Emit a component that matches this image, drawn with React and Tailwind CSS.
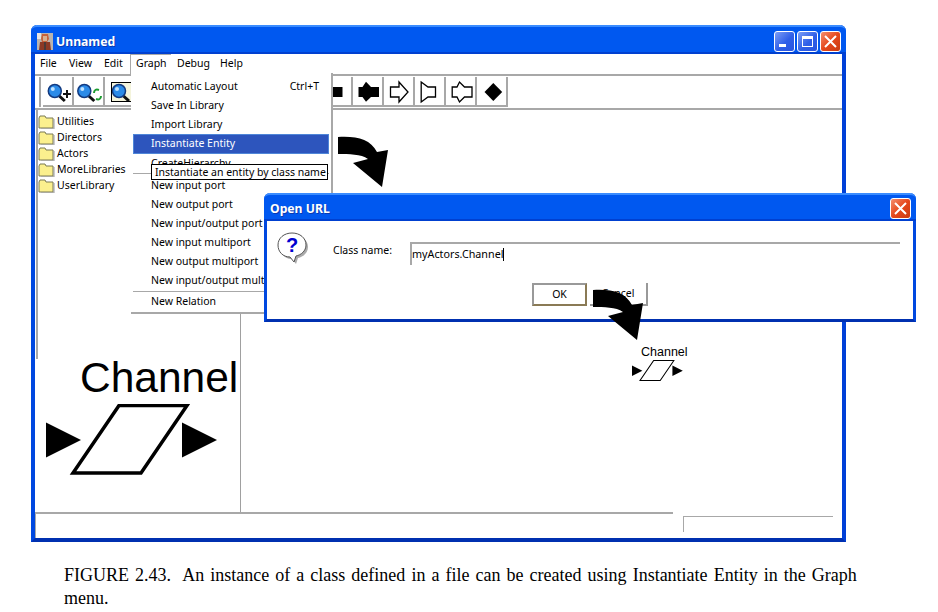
import React from 'react';

const ui = { fontFamily: '"Noto Sans", sans-serif' };
const arial = { fontFamily: '"Liberation Sans", sans-serif' };

const Folder = () => (
    <svg width="17" height="14" viewBox="0 0 17 14">
        <path d="M1 3 L2 1 H7 L8 3 H15 V13 H1 Z" fill="#fbf08e" stroke="#7a7a55" />
        <path d="M16 4 V14 H3" fill="none" stroke="#999" />
    </svg>
);

const Magnifier = ({ mark, cx = 9.8 }) => (
    <svg width="26" height="24" viewBox="0 0 26 24">
        <path d={`M${cx + 4.5} 16 L${cx + 10} 21`} stroke="#111" strokeWidth="3" />
        <circle cx={cx} cy="11" r="6.5" fill="#2b8be8" stroke="#123a80" strokeWidth="1.5" />
        <circle cx={cx - 2} cy="9" r="2" fill="#bfe2ff" />
        {mark === 'plus' && <path d="M18 14 H26 M22 10 V18" stroke="#111" strokeWidth="2" />}
        {mark === 'reset' && (
            <g fill="none" stroke="#1c9c30" strokeWidth="2">
                <path d="M18 13 C18 10 20 9 23 10" />
                <path d="M25 16 C25 19 23 20 20 19" />
            </g>
        )}
    </svg>
);

const shapes = {
    blackEnd: <path d="M1 7 H16.5 V17 H1 Z" fill="#000" />,
    blackBoth: <path d="M1.5 7 H5.5 L9 1.7 L14 7 H22 V17 H14 L9 21.7 L5.5 17 H1.5 Z" fill="#000" />,
    hollowRight: <path d="M2.5 7 H11 V2 L20 12 L11 22 V17 H2.5 Z" fill="#fff" stroke="#000" strokeWidth="1.3" />,
    hollowFlag: <path d="M2.2 2 L9 7 H16.5 V17 H9 L2.2 22 Z" fill="#fff" stroke="#000" strokeWidth="1.3" />,
    hollowBoth: <path d="M2.2 7 H7 L9.5 2 L14.5 7 H22 V17 H14.5 L9.5 22 L7 17 H2.2 Z" fill="#fff" stroke="#000" strokeWidth="1.3" />,
    diamond: <path d="M12.3 3 L21.2 12 L12.3 21 L3.5 12 Z" fill="#000" />,
};

const ToolButton = ({ children }) => (
    <div className="flex h-[30px] w-[31px] shrink-0 items-center justify-center border-r-2 border-b-2 border-[#a8a8a8] bg-white pt-[2px]">
        {children}
    </div>
);

const Shape = ({ name }) => (
    <svg width="22" height="24" viewBox="0 0 22 24" className="overflow-visible">{shapes[name]}</svg>
);

const CloseButton = () => (
    <div className="flex h-[21px] w-[21px] items-center justify-center rounded-[3px] border border-white bg-[linear-gradient(135deg,#f58f70,#e5481c_50%,#c93a10)]">
        <svg width="13" height="13" viewBox="0 0 13 13"><path d="M1 1 L12 12 M12 1 L1 12" stroke="#fff" strokeWidth="2" /></svg>
    </div>
);

const tree = ['Utilities', 'Directors', 'Actors', 'MoreLibraries', 'UserLibrary'];
const menuTop = ['Automatic Layout', 'Save In Library', 'Import Library'];
const menuPorts = ['New input port', 'New output port', 'New input/output port', 'New input multiport', 'New output multiport', 'New input/output multiport'];
const menuBar = [['File', 'w-[29px]'], ['View', 'w-[35px]'], ['Edit', 'w-[32px]'], ['Graph', 'w-[41px]'], ['Debug', 'w-[43px]'], ['Help', 'w-[30px]']];

const CurvedArrow = ({ className }) => (
    <svg className={className} width="52" height="52" viewBox="0 0 52 52">
        <path d="M1 1 C20 0 33 3 40 16 L51 14 L45 51 L16 27 L31 23 C24 18 12 18 1 18 Z" fill="#000" />
    </svg>
);

const ChannelIcon = ({ className, size }) => (
    <svg className={className} width={size} height={size * 0.5} viewBox="0 0 175 87.5">
        <path d="M0 18.5 L35 36 L0 53.5 Z M136 18.5 L171 36 L136 53.5 Z" fill="#000" />
        <path d="M73 1.5 H141 L95 69 H27 Z" fill="#fff" stroke="#000" strokeWidth="3.5" />
    </svg>
);

export default function App() {
    return (
        <div className="relative h-[612px] w-[938px] overflow-hidden bg-white text-[10.5px] text-black" style={ui}>
            <div className="ml-[31px] pt-[25px]">
                <div className="flex h-[517px] w-[815px] flex-col rounded-t-md border-x-4 border-b-4 border-[#0048e0] border-r-[#0040d8] border-b-[#0030b0] bg-white">
                    <div className="-mx-1 flex h-[29px] shrink-0 items-center rounded-t-md border-t-2 border-[#3a8cff] bg-[#0058f0] pl-[6px] pr-[5px] pt-[1px] shadow-[inset_0_-2px_0_#0040d0]">
                        <svg width="16" height="17" viewBox="0 0 16 17">
                            <rect width="16" height="17" fill="#b9b4b0" />
                            <rect x="0" y="0" width="4" height="6" fill="#e8e4e0" />
                            <path d="M5 1 H11 L12 6 L10 9 H5 L4 6 Z" fill="#c8623a" />
                            <path d="M6 3 H10 V8 H6 Z" fill="#d8b090" />
                            <path d="M3 9 H13 L14 17 H2 Z" fill="#8c3a26" />
                            <path d="M7 9 H9 V17 H7 Z" fill="#4a3a38" />
                        </svg>
                        <span className="ml-[3px] mt-[2px] text-[12.2px] font-bold leading-none text-white [text-shadow:1px_1px_0_#0a3ab0]">Unnamed</span>
                        <div className="ml-auto flex gap-[2px]">
                            <div className="relative h-[21px] w-[21px] rounded-[3px] border border-white bg-[linear-gradient(135deg,#7d9ef5,#2f5fe8_55%,#2a55e0)]">
                                <div className="absolute bottom-[4px] left-[4px] h-[3px] w-[7px] bg-white" />
                            </div>
                            <div className="flex h-[21px] w-[21px] items-center justify-center rounded-[3px] border border-white bg-[linear-gradient(135deg,#7d9ef5,#2f5fe8_55%,#2a55e0)]">
                                <div className="h-[11px] w-[11px] border border-t-[3px] border-white" />
                            </div>
                            <CloseButton />
                        </div>
                    </div>

                    <div className="flex h-[20px] shrink-0 items-center pl-[5px]">
                        {menuBar.map(([label, width]) => (
                            <span key={label} className={width}>{label}</span>
                        ))}
                    </div>

                    <div className="flex h-[36px] shrink-0 items-center border-y-2 border-[#a8a8a8] pl-[4px]">
                        <div className="mr-[2px] h-[30px] w-[2px] bg-[#a8a8a8]" />
                        <ToolButton><Magnifier mark="plus" /></ToolButton>
                        <ToolButton><Magnifier mark="reset" cx={8.3} /></ToolButton>
                        <ToolButton>
                            <div className="ml-[8px] h-[20px] w-[26px] shrink-0 overflow-hidden border border-black bg-[#f4f4dc]">
                                <div className="-mt-[3px]"><Magnifier cx={7} /></div>
                            </div>
                        </ToolButton>
                        {Array.from({ length: 6 }).map((_, i) => <ToolButton key={i} />)}
                        <ToolButton><Shape name="blackEnd" /></ToolButton>
                        <ToolButton><Shape name="blackBoth" /></ToolButton>
                        <ToolButton><Shape name="hollowRight" /></ToolButton>
                        <ToolButton><Shape name="hollowFlag" /></ToolButton>
                        <ToolButton><Shape name="hollowBoth" /></ToolButton>
                        <ToolButton><Shape name="diamond" /></ToolButton>
                    </div>

                    <div className="flex min-h-0 flex-1">
                        <div className="flex w-[206px] shrink-0 flex-col border-r border-[#a0a0a0]">
                            <div className="ml-[1px] flex h-[249px] flex-col border-l-2 border-[#a8a8a8] pt-[4px]">
                                {tree.map((name) => (
                                    <div key={name} className="flex h-[16px] items-center gap-[2px]">
                                        <Folder />
                                        <span>{name}</span>
                                    </div>
                                ))}
                            </div>
                            <div className="-mt-[1px] flex flex-1 flex-col pl-[11px]">
                                <div className="ml-[34px] whitespace-nowrap text-[42.5px] leading-[40px]" style={arial}>Channel</div>
                                <ChannelIcon className="mt-[6px]" size={175} />
                            </div>
                        </div>
                        <div className="flex-1" />
                    </div>

                    <div className="flex h-[26px] shrink-0">
                        <div className="h-full w-[638px] border-t-2 border-l border-[#a8a8a8]" />
                        <div className="ml-[10px] mt-[4px] h-[16px] w-[150px] border-t border-l border-[#a8a8a8]" />
                    </div>
                </div>
            </div>

            <div className="ml-[64px] mt-[22px] w-[800px] text-[18px] leading-[23px] [word-spacing:1.55px]" style={{ fontFamily: '"Liberation Serif", serif' }}>
                FIGURE 2.43.&nbsp; An instance of a class defined in a file can be created using Instantiate Entity in the Graph menu.
            </div>

            {/* open Graph menu */}
            <div className="absolute left-[130px] top-[54px] h-[20px] w-[41px] border-l border-t border-[#a8a8a8]" />
            <div className="absolute left-[131px] top-[73px] flex h-[241px] w-[202px] flex-col border-r-2 border-b-2 border-[#a8a8a8] bg-white px-[2px] pt-[4px]">
                {menuTop.map((item) => (
                    <div key={item} className="flex h-[19px] shrink-0 items-center justify-between pl-[18px] pr-[10px]">
                        <span>{item}</span>
                        {item === 'Automatic Layout' && <span>Ctrl+T</span>}
                    </div>
                ))}
                <div className="flex h-[20px] shrink-0 items-center border border-[#4f86d8] bg-[#2d55bd] pl-[17px] text-white">Instantiate Entity</div>
                <div className="flex h-[19px] shrink-0 items-center pl-[18px]">CreateHierarchy</div>
                <div className="h-px shrink-0 bg-[#a8a8a8]" />
                <div className="mt-[2px] flex h-[19px] shrink-0 items-center pl-[18px]">{menuPorts[0]}</div>
                {menuPorts.slice(1).map((item) => (
                    <div key={item} className="flex h-[19px] shrink-0 items-center whitespace-nowrap pl-[18px]">{item}</div>
                ))}
                <div className="mt-[1px] h-px shrink-0 bg-[#a8a8a8]" />
                <div className="flex h-[19px] shrink-0 items-center pl-[18px]">New Relation</div>
            </div>
            <div className="absolute left-[151px] top-[164px] h-[16px] w-[177px] whitespace-nowrap border border-black bg-white pl-[3px] leading-[14px]">Instantiate an entity by class name</div>

            <CurvedArrow className="absolute left-[337px] top-[136px]" />

            {/* Open URL dialog */}
            <div className="absolute left-[264px] top-[193px] flex h-[129px] w-[652px] flex-col rounded-t-md border-x-[3px] border-b-[3px] border-[#0048e0] border-b-[#0030b0] bg-white">
                <div className="-mx-[3px] flex h-[28px] shrink-0 items-center justify-between rounded-t-md border-t-2 border-[#3a8cff] bg-[#0058f0] pl-[6px] pr-[5px] shadow-[inset_0_-2px_0_#0040d0]">
                    <span className="mt-[2px] text-[12.2px] font-bold leading-none text-white [text-shadow:1px_1px_0_#0a3ab0]">Open URL</span>
                    <CloseButton />
                </div>
                <div className="flex items-start pl-[10px] pt-[11px]">
                    <svg width="33" height="33" viewBox="0 0 33 33">
                        <path d="M17 3 C25 3 31 8 31 15 C31 21 26 25 21 26 L19 32 L15 27 C8 27 3 22 3 15 C3 8 9 3 17 3 Z" fill="#aaa" />
                        <path d="M15 1 C23 1 29 6 29 13 C29 19 24 23 19 24 L17 30 L13 25 C6 25 1 20 1 13 C1 6 7 1 15 1 Z" fill="#fff" stroke="#555" />
                        <text x="15" y="20" textAnchor="middle" fontSize="20" fontWeight="bold" fill="#0000d0" fontFamily="Liberation Sans">?</text>
                    </svg>
                    <span className="ml-[23px] mt-[11px] w-[77px]">Class name:</span>
                    <div className="mt-[10px] flex h-[23px] w-[490px] items-center border-t-2 border-l-2 border-[#a8a8a8] text-[10.75px]">
                        myActors.Channel<span className="h-[13px] w-px bg-black" />
                    </div>
                </div>
                <div className="ml-[265px] mt-[18px] flex gap-[3px]">
                    <div className="flex h-[23px] w-[55px] items-center justify-center border-2 border-[#999] border-r-[#8a7a55] border-b-[#8a7a55]">OK</div>
                    <div className="flex h-[23px] w-[58px] items-center justify-center border-r-2 border-b-2 border-[#999]">Cancel</div>
                </div>
            </div>

            <CurvedArrow className="absolute left-[592px] top-[289px]" />

            <div className="absolute left-[641px] top-[345px] text-[12.5px] leading-[14px]" style={arial}>Channel</div>
            <ChannelIcon className="absolute left-[632px] top-[360px]" size={52} />
        </div>
    );
}
